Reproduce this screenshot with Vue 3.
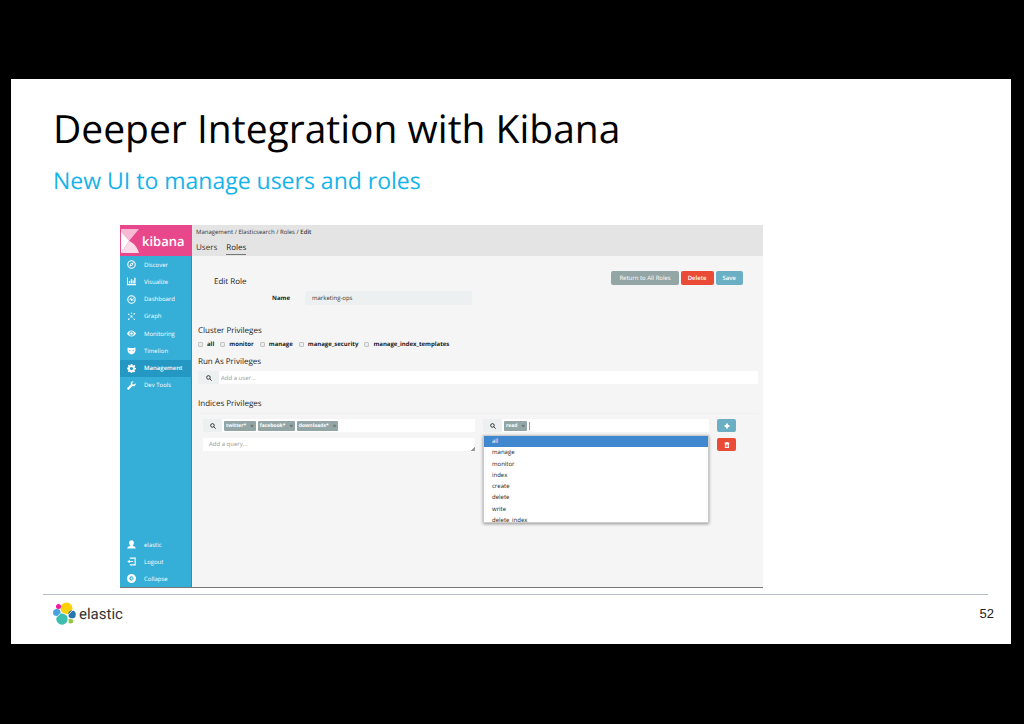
<script setup>
import { ref } from 'vue'

const navItems = [
  { label: 'Discover', icon: 'compass' },
  { label: 'Visualize', icon: 'chart' },
  { label: 'Dashboard', icon: 'gauge' },
  { label: 'Graph', icon: 'graph' },
  { label: 'Monitoring', icon: 'eye' },
  { label: 'Timelion', icon: 'mask' },
  { label: 'Management', icon: 'gear', active: true },
  { label: 'Dev Tools', icon: 'wrench' },
]
const accountItems = [
  { label: 'elastic', icon: 'user' },
  { label: 'Logout', icon: 'logout' },
  { label: 'Collapse', icon: 'collapse' },
]
const icons = {
  compass:
    '<circle cx="8" cy="8" r="6.6" fill="none" stroke="currentColor" stroke-width="1.9"/><path fill-rule="evenodd" d="M12 4 9.8 9.8 4 12 6.200 6.200ZM8 6.800a1.200 1.200 0 1 0 0 2.400 1.200 1.200 0 0 0 0-2.400Z"/>',
  chart: '<path d="M0 1h1.800v11.400H16v2.400H0ZM3.400 7h2.400v4.500H3.400ZM6.800 4h2.400v7.500H6.800ZM10 6h2v5.500h-2ZM12.800 1.500h2.400v10h-2.400Z"/>',
  gauge:
    '<circle cx="8" cy="8" r="6.6" fill="none" stroke="currentColor" stroke-width="1.9"/><path d="M4.500 4.500 8.500 6.500a2 2 0 1 1-2 2ZM8 3h1.500v1.500H8ZM11 5h1.500v1.500H11ZM3.500 8H5v1.500H3.500ZM11.500 8.500H13V10h-1.500Z"/>',
  graph:
    '<path fill="none" stroke="currentColor" stroke-width="0.6" d="m3 4 5 4 5-5M3 13l5-5 5 5"/><circle cx="8" cy="8" r="1.600"/><circle cx="3" cy="4" r="1.200"/><circle cx="13" cy="3" r="1.400"/><circle cx="3" cy="13" r="1.400"/><circle cx="13" cy="13" r="1.200"/><circle cx="8" cy="2" r="1"/>',
  eye: '<path fill-rule="evenodd" d="M0 8c2-3.700 4.700-5.400 8-5.400S14 4.300 16 8c-2 3.700-4.700 5.400-8 5.400S2 11.700 0 8Zm8-4a4 4 0 1 0 0 8 4 4 0 0 0 0-8Z"/><circle cx="8" cy="8" r="2.200"/>',
  mask: '<path fill-rule="evenodd" d="M1 2.500c3 .8 4.500 1 7 1s4-.2 7-1V8c0 3.500-3.500 6.500-7 7-3.500-.5-7-3.500-7-7Zm2.500 4L7 9C5 9.500 3.500 8.500 3.500 6.500Zm9 0L9 9c2 .5 3.500-.5 3.500-2.500Z"/>',
  gear: '<path fill-rule="evenodd" d="M6.600 0h2.800l.4 2.300 1.300.6L13 1.500 14.800 3.500 13.300 5.300l.5 1.300 2.200.3v2.600l-2.200.4-.6 1.300 1.400 1.900-2 1.900-1.800-1.400-1.200.5L9.300 16H6.700l-.4-2-1.300-.6-1.900 1.400-1.800-2 1.300-1.800-.5-1.300L0 9.400V6.800l2.200-.4.6-1.300-1.400-1.900 1.900-1.900L5.100 2.700l1.200-.4ZM8 5.200a2.800 2.800 0 1 0 0 5.600 2.800 2.800 0 0 0 0-5.600Z"/>',
  wrench: '<path d="M15.500 4a4.500 4.500 0 0 1-6 5.100L3.600 15a2 2 0 0 1-2.800-2.800L6.800 6.300A4.500 4.500 0 0 1 12 .5L9.400 3.200l.5 2.600 2.700.5Z"/>',
  user: '<path d="M8 .5c2.800 0 4.300 1.700 4.300 4.200 0 2-1 3.800-2 4.500v1.300c3 .8 5.200 1.500 5.200 4.700H.5c0-3.200 2.200-3.900 5.200-4.700V9.200c-1-.7-2-2.500-2-4.500C3.700 2.200 5.200.5 8 .5Z"/>',
  logout: '<path d="M5 1h10.500v14H5v-2h8.500V3H5ZM4.800 4.800v2.300H11v1.900H4.800v2.300L.5 8Z"/>',
  collapse: '<path fill-rule="evenodd" d="M8 0a8 8 0 1 1 0 16A8 8 0 0 1 8 0Zm0 4.200a3.800 3.800 0 1 0 0 7.600 3.800 3.800 0 0 0 0-7.600Z"/><path d="M9.500 5v6L6 8Z"/>',
}
const clusterPrivileges = ref([
  { name: 'all', on: false },
  { name: 'monitor', on: false },
  { name: 'manage', on: false },
  { name: 'manage_security', on: false },
  { name: 'manage_index_templates', on: false },
])
const roleName = ref('marketing-ops')
const indices = ref(['twitter*', 'facebook*', 'downloads*'])
const granted = ref(['read'])
const options = ['all', 'manage', 'monitor', 'index', 'create', 'delete', 'write', 'delete_index']
const highlighted = ref('all')
const remove = (list, item) => list.splice(list.indexOf(item), 1)
</script>

<template>
  <main class="stage">
    <article class="slide">
      <h1>Deeper Integration with Kibana</h1>
      <p class="subtitle">New UI to manage users and roles</p>

      <section class="app">
        <aside class="sidebar">
          <a class="brand" href="#">
            <svg class="brand-mark" viewBox="0 0 18 24" aria-hidden="true">
              <path d="M0 0h18L8 12 0 22Z" fill="#f7b9d4" />
              <path d="M0 3v21l8-12Z" fill="#fff" />
              <path d="M0 24 8 12c5 2 8 6 10 12Z" fill="#fbdbe9" />
            </svg>
            <span>kibana</span>
          </a>
          <nav class="nav primary">
            <a v-for="item in navItems" :key="item.label" href="#" :class="{ active: item.active }">
              <svg viewBox="0 0 16 16" aria-hidden="true" v-html="icons[item.icon]"></svg>
              {{ item.label }}
            </a>
          </nav>
          <nav class="nav account">
            <a v-for="item in accountItems" :key="item.label" href="#">
              <svg viewBox="0 0 16 16" aria-hidden="true" v-html="icons[item.icon]"></svg>
              {{ item.label }}
            </a>
          </nav>
        </aside>

        <div class="body">
          <header class="topbar">
            <div class="crumbs">
              <a href="#">Management</a> / <a href="#">Elasticsearch</a> / <a href="#">Roles</a> / <b>Edit</b>
            </div>
            <nav class="tabs">
              <a href="#">Users</a>
              <a href="#" class="current">Roles</a>
            </nav>
          </header>

          <form class="content" @submit.prevent>
            <div class="toolbar">
              <h2>Edit Role</h2>
              <div class="actions">
                <button type="button" class="btn gray">Return to All Roles</button>
                <button type="button" class="btn red">Delete</button>
                <button type="submit" class="btn teal">Save</button>
              </div>
            </div>

            <div class="name-row">
              <label for="role-name">Name</label>
              <input id="role-name" v-model="roleName" type="text" />
            </div>

            <h3 class="cluster-title">Cluster Privileges</h3>
            <div class="checks">
              <label v-for="p in clusterPrivileges" :key="p.name">
                <input v-model="p.on" type="checkbox" />{{ p.name }}
              </label>
            </div>

            <h3 class="run-title">Run As Privileges</h3>
            <div class="picker run-picker">
              <span class="lens">
                <svg viewBox="0 0 16 16" aria-hidden="true"><circle cx="6.500" cy="6.500" r="4.800" /><path d="m10 10 5 5" /></svg>
              </span>
              <input type="text" placeholder="Add a user..." aria-label="Add a user" />
            </div>

            <h3 class="indices-title">Indices Privileges</h3>
            <div class="indices">
              <div class="column index-column">
                <div class="picker">
                  <span class="lens">
                    <svg viewBox="0 0 16 16" aria-hidden="true"><circle cx="6.500" cy="6.500" r="4.800" /><path d="m10 10 5 5" /></svg>
                  </span>
                  <span v-for="i in indices" :key="i" class="tag">
                    {{ i }}<button type="button" :aria-label="'Remove ' + i" @click="remove(indices, i)">×</button>
                  </span>
                  <input type="text" aria-label="Add an index" />
                </div>
                <textarea rows="1" placeholder="Add a query..." aria-label="Query"></textarea>
              </div>
              <div class="column privilege-column">
                <div class="picker">
                  <span class="lens">
                    <svg viewBox="0 0 16 16" aria-hidden="true"><circle cx="6.500" cy="6.500" r="4.800" /><path d="m10 10 5 5" /></svg>
                  </span>
                  <span v-for="g in granted" :key="g" class="tag">
                    {{ g }}<button type="button" :aria-label="'Remove ' + g" @click="remove(granted, g)">×</button>
                  </span>
                  <span class="caret"></span>
                  <input type="text" aria-label="Add a privilege" />
                </div>
                <div class="menu">
                  <ul role="listbox" aria-label="Privileges">
                    <li
                      v-for="o in options"
                      :key="o"
                      role="option"
                      :aria-selected="o === highlighted"
                      :class="{ on: o === highlighted }"
                      @mouseenter="highlighted = o"
                    >{{ o }}</li>
                  </ul>
                </div>
              </div>
              <div class="column row-actions">
                <button type="button" class="btn teal" aria-label="Add row">
                  <svg viewBox="0 0 10 10" aria-hidden="true"><path d="M3.500 1h3v2.500H9v3H6.500V9h-3V6.500H1v-3h2.500Z" /></svg>
                </button>
                <button type="button" class="btn red" aria-label="Delete row">
                  <svg viewBox="0 0 10 10" aria-hidden="true">
                    <path fill-rule="evenodd" d="M3.500 0h3v1H9v1.500H8.500V10h-7V2.500H1V1h2.500ZM3 4v4.500h1V4Zm1.500 0v4.500h1V4ZM6 4v4.500h1V4Z" />
                  </svg>
                </button>
              </div>
            </div>
          </form>
        </div>
      </section>

      <footer class="footer">
        <a class="elastic" href="#">
          <svg viewBox="0 0 46 46" aria-hidden="true">
            <circle cx="27" cy="13" r="12" fill="#fdd009" />
            <circle cx="11" cy="9" r="5" fill="#f0189b" />
            <ellipse cx="8" cy="21" rx="8" ry="7" fill="#48a2e0" />
            <circle cx="18" cy="34" r="11.500" fill="#3ebeb0" />
            <ellipse cx="38" cy="25" rx="7.500" ry="8" fill="#2675b1" />
            <ellipse cx="35" cy="38" rx="5.500" ry="5" fill="#93c83e" />
            <path d="m14 14 2 7 14 5 10-10M16 21l-9 10M30 26l1 18M31 32l12 3" fill="none" stroke="#fff" stroke-width="1.500" />
          </svg>
          <span>elastic</span>
        </a>
        <span class="page">52</span>
      </footer>
    </article>
  </main>
</template>

<style>
html,
body {
  background: #000;
}
</style>

<style scoped>
* {
  box-sizing: border-box;
}
.stage {
  min-height: 100vh;
  padding: 79px 13px 80px 11px;
  background: #000;
  font-family: 'Open Sans', 'Noto Sans', sans-serif;
  text-rendering: geometricPrecision;
}
.slide {
  background: #fff;
  color: #000;
  padding-top: 23px;
}
h1,
h2,
h3,
p,
ul {
  margin: 0;
  padding: 0;
  font-weight: 400;
}
a {
  color: inherit;
  text-decoration: none;
}
button,
input,
textarea {
  font: inherit;
  text-rendering: inherit;
  border: 0;
  margin: 0;
  padding: 0;
  min-width: 0;
  outline: 0;
}
h1 {
  padding-left: 42px;
  font-size: 39px;
  line-height: 54px;
}
.subtitle {
  padding-left: 42px;
  margin-top: 8px;
  font-size: 23px;
  line-height: 32px;
  color: #14b4ea;
}

.app {
  display: flex;
  margin: 29px 248px 0 109px;
  min-height: 363px;
  font-size: 6px;
  line-height: 8px;
  color: #333;
  background: #f5f5f5;
  border-bottom: 1px solid #777;
}
.sidebar {
  width: 72px;
  display: flex;
  flex-direction: column;
  background: #35aed8;
  border-right: 1px solid #2791b8;
  color: #fff;
}
.brand {
  display: flex;
  align-items: center;
  height: 31px;
  padding-left: 1px;
  margin-right: -1px;
  gap: 3px;
  background: #e8478b;
  font-size: 13px;
  line-height: 16px;
  font-weight: 600;
}
.brand-mark {
  width: 18px;
  height: 24px;
  flex: none;
}
.nav a {
  display: flex;
  align-items: center;
  padding-left: 7px;
  gap: 8px;
  color: #fff;
}
.nav svg {
  width: 9px;
  height: 9px;
  fill: currentColor;
}
.nav a.active {
  background: #2497c3;
  font-weight: 600;
  margin-right: -1px;
}
.primary {
  display: grid;
  grid-auto-rows: 1fr;
  height: 138px;
}
.account {
  margin-top: auto;
}
.account a {
  height: 17px;
}
.body {
  flex: 1;
  min-width: 0;
}
.topbar {
  height: 31px;
  padding: 3px 4px 0;
  background: #e4e4e4;
}
.crumbs b {
  font-weight: 600;
}
.tabs {
  display: flex;
  gap: 9px;
  margin-top: 5px;
  font-size: 8px;
  line-height: 13px;
}
.tabs .current {
  border-bottom: 1px solid #777;
  color: #222;
}
.content {
  padding: 15px 5px 0 6px;
}
.toolbar {
  display: flex;
  justify-content: space-between;
  align-items: flex-start;
  height: 16px;
  padding: 0 15px 0 16px;
}
h2,
h3 {
  font-size: 8px;
  line-height: 12px;
  color: #222;
}
h2 {
  margin-top: 5px;
}
.actions {
  display: flex;
  gap: 2px;
}
.btn {
  height: 14px;
  padding: 0 7px;
  border-radius: 2px;
  color: #fff;
  cursor: pointer;
}
.gray {
  padding: 0 8px;
  background: #94a5a5;
}
.red {
  background: #ea4b36;
  font-weight: 600;
}
.teal {
  background: #6aafc3;
  font-weight: 600;
}
.name-row {
  display: flex;
  align-items: center;
  gap: 15px;
  margin-top: 4px;
  padding-left: 74px;
}
.name-row label {
  font-weight: 700;
  color: #222;
}
.name-row input {
  flex: 0 0 167px;
  height: 14px;
  padding: 0 7px;
  border-radius: 2px;
  background: #ecf0f1;
  color: #333;
}
.cluster-title {
  margin-top: 20px;
}
.checks {
  display: flex;
  gap: 6px;
  margin-top: 1px;
}
.checks label {
  display: flex;
  align-items: center;
  gap: 4px;
  height: 12px;
  font-weight: 700;
  color: #222;
}
.checks input {
  appearance: none;
  width: 5px;
  height: 5px;
  border: 1px solid #c4c4c4;
  border-radius: 1px;
  background: #ececec;
}
.checks input:checked {
  background: #35aed8;
}
.run-title {
  margin-top: 6px;
}
.picker {
  display: flex;
  align-items: center;
  height: 13px;
  gap: 2px;
  background: #fff;
}
.picker input {
  flex: 1;
  height: 13px;
  background: transparent;
}
.run-picker {
  margin-top: 3px;
}
.lens {
  display: flex;
  align-items: center;
  justify-content: center;
  width: 21px;
  height: 13px;
  background: #ecf0f1;
}
.column .lens {
  width: 19px;
}
.lens svg {
  width: 6px;
  height: 6px;
  fill: none;
  stroke: #333;
  stroke-width: 2.600;
}
::placeholder {
  color: #999;
  opacity: 1;
}
.indices-title {
  margin-top: 14px;
  padding-bottom: 3px;
  border-bottom: 1px solid #f0f0f0;
}
.indices {
  display: flex;
  gap: 8px;
  margin-top: 5px;
  padding: 0 22px 0 5px;
}
.column {
  display: flex;
  flex-direction: column;
  gap: 6px;
}
.index-column {
  flex: 272;
}
.privilege-column {
  flex: 226;
  position: relative;
}
.tag {
  display: flex;
  align-items: center;
  height: 10px;
  padding: 0 2px;
  gap: 4px;
  border-radius: 1px;
  background: #94a5a5;
  color: #fff;
  font-size: 5px;
  font-weight: 700;
}
.tag button {
  background: none;
  color: #5d6c6c;
  font-size: 6px;
  line-height: 8px;
  cursor: pointer;
}
.caret {
  width: 1px;
  height: 8px;
  background: #999;
}
textarea {
  height: 13px;
  padding: 2px 6px;
  line-height: 9px;
  background: #fff;
  resize: both;
  overflow: hidden;
}
textarea::-webkit-resizer {
  background: linear-gradient(135deg, transparent 50%, #999 50%) right bottom / 4px 4px no-repeat;
}
.menu {
  position: absolute;
  top: 16px;
  left: 0;
  right: 0;
  height: 88px;
  overflow: hidden;
  background: #fff;
  border: 1px solid #ccc;
  box-shadow: 0 1px 3px rgba(0, 0, 0, 0.4);
}
.menu ul {
  display: grid;
  grid-auto-rows: 1fr;
  height: 90px;
  list-style: none;
}
.menu li {
  padding-left: 8px;
  line-height: 11px;
  color: #222;
}
.menu li.on {
  background: #3f87cf;
  color: #fff;
}
.row-actions .btn {
  display: flex;
  align-items: center;
  justify-content: center;
  width: 19px;
  height: 13px;
  padding: 0;
}
.row-actions svg {
  width: 6px;
  height: 6px;
  fill: #fff;
}

.footer {
  display: flex;
  justify-content: space-between;
  align-items: center;
  margin: 6px 23px 0 32px;
  padding: 0 0 12px 10px;
  height: 50px;
  border-top: 1px solid #b4bcc6;
}
.elastic {
  display: flex;
  align-items: center;
  gap: 3px;
  font-family: Roboto, sans-serif;
  font-size: 15px;
  color: #333;
}
.elastic svg {
  width: 23px;
  height: 23px;
}
.page {
  margin-right: -6px;
  font-family: 'Liberation Sans', Arial, sans-serif;
  font-size: 13px;
  color: #222;
}
</style>
